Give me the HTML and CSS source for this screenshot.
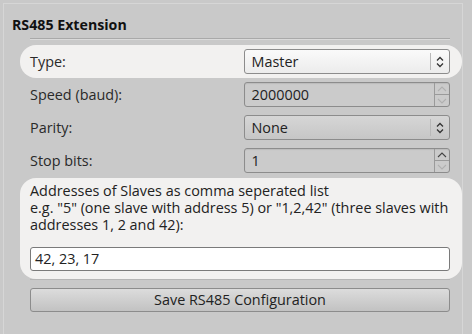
FILE: index.html
```html
<!DOCTYPE html>
<html>
<head>
<meta charset="utf-8">
<link rel="stylesheet" href="styles.css">
</head>
<body>
<div class="frame">
  <div class="title">RS485 Extension</div>
  <div class="sep"></div>
  <div class="row hl">
    <span class="label">Type:</span>
    <div class="combo"><span class="val">Master</span><span class="cbtn"><svg width="8" height="12" viewBox="0 0 8 12"><path d="M1 4.5 L4 1.5 L7 4.5 M1 7.5 L4 10.5 L7 7.5" fill="none" stroke="#333" stroke-width="1.3"/></svg></span></div>
  </div>
  <div class="row">
    <span class="label">Speed (baud):</span>
    <div class="spin"><span class="val">2000000</span><span class="sbtns"><span class="sb"><svg width="10" height="6" viewBox="0 0 10 6"><path d="M1 5 L5 1 L9 5" fill="none" stroke="#b0b0b0" stroke-width="1.1"/></svg></span><span class="sb sb2"><svg width="10" height="6" viewBox="0 0 10 6"><path d="M1 1 L5 5 L9 1" fill="none" stroke="#b0b0b0" stroke-width="1.1"/></svg></span></span></div>
  </div>
  <div class="row">
    <span class="label">Parity:</span>
    <div class="combo"><span class="val">None</span><span class="cbtn"><svg width="8" height="12" viewBox="0 0 8 12"><path d="M1 4.5 L4 1.5 L7 4.5 M1 7.5 L4 10.5 L7 7.5" fill="none" stroke="#333" stroke-width="1.3"/></svg></span></div>
  </div>
  <div class="row">
    <span class="label">Stop bits:</span>
    <div class="spin"><span class="val">1</span><span class="sbtns"><span class="sb"><svg width="10" height="6" viewBox="0 0 10 6"><path d="M1 5 L5 1 L9 5" fill="none" stroke="#444" stroke-width="1.1"/></svg></span><span class="sb sb2"><svg width="10" height="6" viewBox="0 0 10 6"><path d="M1 1 L5 5 L9 1" fill="none" stroke="#b0b0b0" stroke-width="1.1"/></svg></span></span></div>
  </div>
  <div class="addr">
    <div class="desc">Addresses of Slaves as comma seperated list<br>e.g. "5" (one slave with address 5) or "1,2,42" (three slaves with<br>addresses 1, 2 and 42):</div>
    <div class="input">42, 23, 17</div>
  </div>
  <div class="sep2"></div>
  <div class="btn">Save RS485 Configuration</div>
</div>
</body>
</html>
```
FILE: styles.css
```css
html, body {
  margin: 0;
  padding: 0;
  background: #c9c9c9;
  width: 472px;
  height: 334px;
  overflow: hidden;
  font-family: "Open Sans", "DejaVu Sans", sans-serif;
  font-size: 14.4px;
  color: #2a2a2a;
}
.frame {
  margin: 3px 0 0 3px;
  width: 460px;
  height: 331px;
  border-left: 1px solid #d6d6d6;
  border-top: 1px solid #d6d6d6;
  border-right: 1px solid #d6d6d6;
  box-sizing: border-box;
}
.title {
  font-weight: bold;
  font-size: 14.2px;
  color: #111;
  margin: 12px 0 0 8px;
  height: 18px;
  line-height: 18px;
}
.sep {
  margin: 4px 12px 5px 26px;
  height: 1px;
  background: #a9a9a9;
  border-bottom: 1px solid #dadada;
}
.row {
  display: flex;
  align-items: center;
  height: 33px;
  margin: 0 0 0 16px;
  padding: 0 12px 0 10px;
  border-radius: 16px;
  box-sizing: border-box;
}
.row.hl {
  background: #f2f1f0;
}
.label {
  width: 215px;
  line-height: 16px;
}
.combo, .spin {
  width: 206px;
  height: 25px;
  box-sizing: border-box;
  border: 1px solid #8c8c8c;
  border-radius: 3px;
  display: flex;
  align-items: stretch;
}
.combo {
  background: linear-gradient(#fafafa, #ececec);
}
.row:not(.hl) .combo {
  background: linear-gradient(#d6d6d6, #c6c6c6);
}
.spin {
  background: #cbcbcb;
  box-shadow: inset 0 1px 1px rgba(0,0,0,0.08);
}
.val {
  flex: 1;
  padding-left: 6px;
  line-height: 23px;
  color: #222;
}
.cbtn {
  width: 18px;
  border-left: 1px solid #b8b8b8;
  margin: 3px 0;
  display: flex;
  align-items: center;
  justify-content: center;
}
.sbtns {
  width: 14px;
  border-left: 1px solid #9a9a9a;
  display: flex;
  flex-direction: column;
}
.sb {
  flex: 1;
  display: flex;
  align-items: center;
  justify-content: center;
}
.sb2 {
  border-top: 1px solid #9a9a9a;
}
.addr {
  margin: 1px 0 0 16px;
  background: #f2f1f0;
  border-radius: 16px;
  padding: 4px 12px 7px 10px;
  height: 101px;
  box-sizing: border-box;
}
.desc {
  line-height: 17px;
  color: #222;
  white-space: nowrap;
}
.input {
  margin-top: 14px;
  height: 24px;
  box-sizing: border-box;
  background: #fff;
  border: 1px solid #7a7a7a;
  border-radius: 3px;
  line-height: 22px;
  padding-left: 4px;
  color: #222;
}
.sep2 {
  margin: 0 12px 0 26px;
  height: 1px;
  background: #b5b5b5;
}
.btn {
  margin: 8px 12px 0 26px;
  height: 24px;
  box-sizing: border-box;
  border: 1px solid #8c8c8c;
  border-radius: 3px;
  background: linear-gradient(#dcdcdc, #c2c2c2);
  text-align: center;
  line-height: 22px;
  color: #222;
}
```
